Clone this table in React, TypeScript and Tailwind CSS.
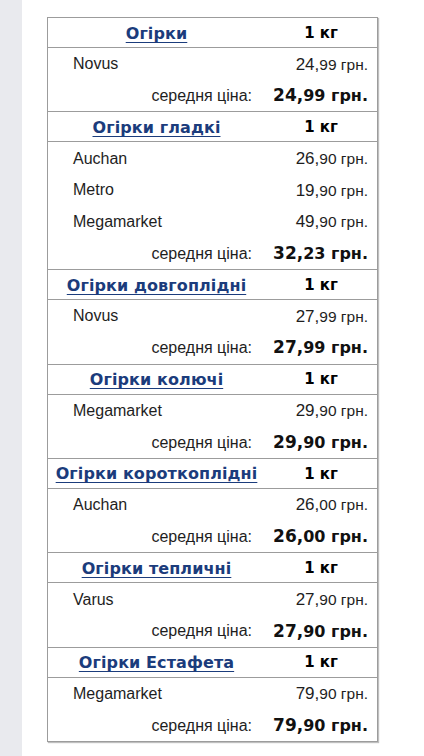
import React from "react";

type Group = { name: string; stores: [string, string, string][]; avg: [string, string] };

const groups: Group[] = [
  { name: "Огірки", stores: [["Novus", "24,", "99"]], avg: ["24,", "99"] },
  {
    name: "Огірки гладкі",
    stores: [
      ["Auchan", "26,", "90"],
      ["Metro", "19,", "90"],
      ["Megamarket", "49,", "90"],
    ],
    avg: ["32,", "23"],
  },
  { name: "Огірки довгоплідні", stores: [["Novus", "27,", "99"]], avg: ["27,", "99"] },
  { name: "Огірки колючі", stores: [["Megamarket", "29,", "90"]], avg: ["29,", "90"] },
  { name: "Огірки короткоплідні", stores: [["Auchan", "26,", "00"]], avg: ["26,", "00"] },
  { name: "Огірки тепличні", stores: [["Varus", "27,", "90"]], avg: ["27,", "90"] },
  { name: "Огірки Естафета", stores: [["Megamarket", "79,", "90"]], avg: ["79,", "90"] },
];

const arial = { fontFamily: '"Liberation Sans", Arial, sans-serif' };
const verd = { fontFamily: '"DejaVu Sans", Verdana, sans-serif' };

export default function App() {
  return (
    <div className="flex w-[424px] h-[756px] overflow-hidden bg-white">
      <div className="w-[22px] shrink-0 bg-[#e9eaee]" />
      <div className="pl-[25px] pt-[17px]">
        <div className="w-[331px] border border-[#9c9c9c] shadow-[1px_1px_1px_rgba(0,0,0,0.25)]">
          {groups.map((g, gi) => (
            <div key={gi} className={gi > 0 ? "border-t border-[#9c9c9c]" : ""}>
              <div className="flex h-[30px] items-center border-b border-[#9c9c9c] pt-[1px]">
                <div className="w-[217px] text-center">
                  <a
                    href="#"
                    className="text-[16px] font-bold text-[#1b3c7c] underline underline-offset-[3px] tracking-[0.1px] [text-decoration-skip-ink:none]"
                    style={verd}
                  >
                    {g.name}
                  </a>
                </div>
                <div className="flex-1 text-center text-[15px] font-bold text-black" style={verd}>
                  1 кг
                </div>
              </div>
              {g.stores.map((s, si) => (
                <div key={si} className="flex h-[31.7px] items-center text-[#1e1e1e] pt-[1px]" style={arial}>
                  <div className="w-[217px] pl-[25px] text-[16px]">{s[0]}</div>
                  <div className="flex-1 pr-[9px] text-right">
                    <span className="text-[17px]">{s[1]}</span>
                    <span className="text-[15.5px]">{s[2]} грн.</span>
                  </div>
                </div>
              ))}
              <div className="flex h-[31.7px] items-center pt-[1px]">
                <div className="w-[217px] pr-[13px] text-right text-[16px] text-[#1e1e1e]" style={arial}>
                  середня ціна:
                </div>
                <div className="flex-1 pr-[9px] text-right font-bold text-[#111]" style={verd}>
                  <span className="text-[17px]">{g.avg[0]}</span>
                  <span className="text-[16px]">{g.avg[1]} грн.</span>
                </div>
              </div>
            </div>
          ))}
        </div>
      </div>
    </div>
  );
}
